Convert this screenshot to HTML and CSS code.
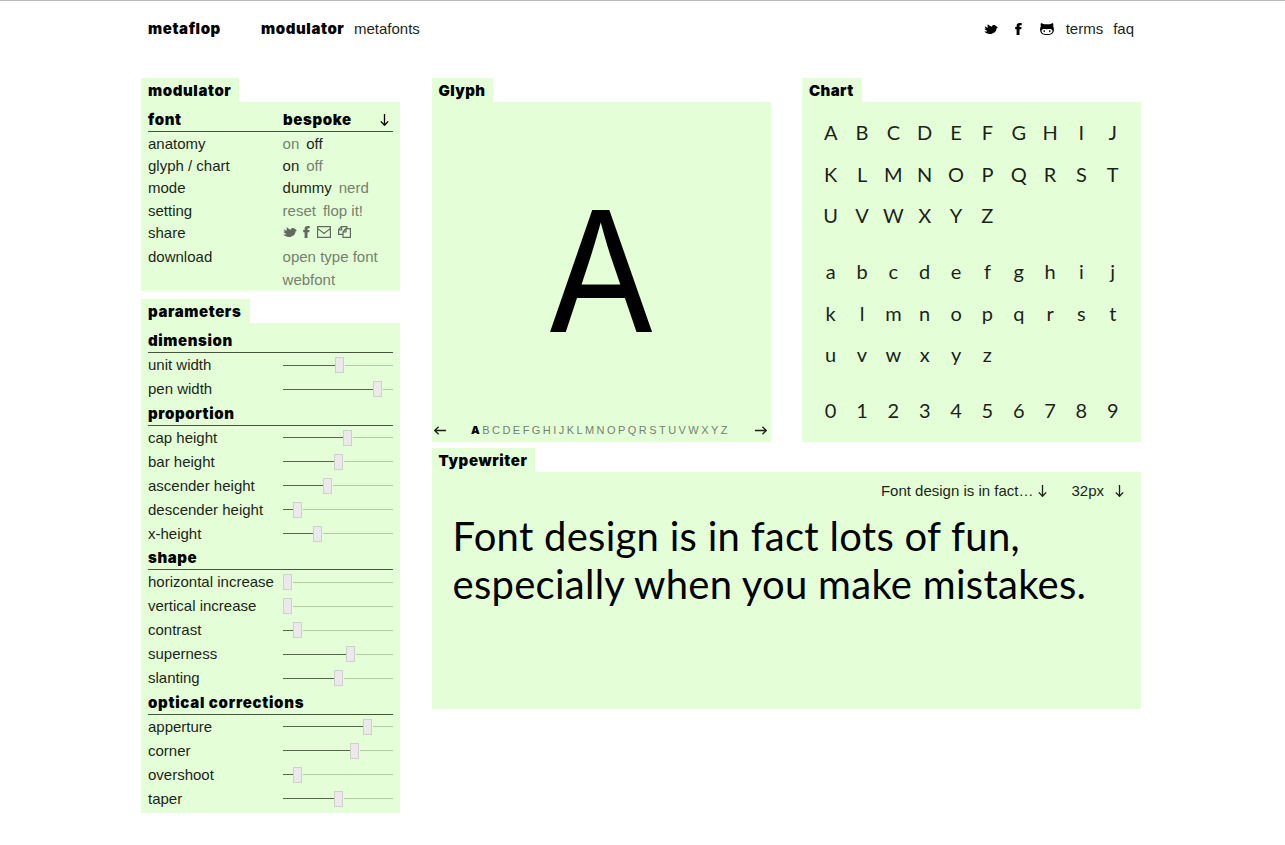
FILE: index.html
```html
<!DOCTYPE html>
<html lang="en">
<head>
<meta charset="utf-8">
<title>metaflop modulator</title>
<link rel="stylesheet" href="styles.css">
</head>
<body>
<svg class="defs" width="0" height="0">
  <symbol id="bird" viewBox="0 0 14 12"><path d="M3.800 1.200C5 2.500 6.500 3.200 7.700 3.700 8.200 1.800 10.600 1.200 12 2.900L13.900 4.600 12.500 5.400C12.300 8.600 9.500 10.900 6 10.900 3.500 10.900 1.600 10 .2 8.300 1.400 8.700 2.600 8.600 3.500 8 2 7.600 1 6.800.5 5.500L2 5.700C1.200 5 .8 4.200.8 3.300 1.900 4.200 3 4.600 4.200 4.700 3.500 3.700 3.300 2.400 3.800 1.200z"/></symbol>
  <symbol id="face" viewBox="0 0 7 12"><path d="M1.600 12V6.300H.2V3.900H1.600V3C1.600.9 2.700 0 4.700 0h2v2.300H5.600c-.8 0-1.100.3-1.100.9v.7h2L6.300 6.300H4.500V12z"/></symbol>
  <symbol id="cat" viewBox="0 0 14 12"><path fill-rule="evenodd" d="M1 .1 4.100 1.300h5.800L13 .1c.5 1.300.4 2.400.1 3.200 1.200 1.800 1.100 4.800-.2 6.600C11.800 11.400 9.700 12 7 12s-4.800-.6-5.900-2.100C-.2 8.100-.3 5.100.9 3.300.6 2.500.5 1.400 1 .1zM3.500 6C1.800 6.200 1.400 7.300 1.600 8.600 1.900 10.600 4 11.100 7 11.100s5.100-.5 5.400-2.500c.2-1.300-.2-2.400-1.900-2.600-1.200-.1-2.300.2-3.500.2S4.700 5.900 3.500 6z"/><ellipse cx="4.200" cy="8.200" rx=".7" ry="1.100"/><ellipse cx="9.800" cy="8.200" rx=".7" ry="1.100"/></symbol>
  <symbol id="mail" viewBox="0 0 14 12"><path fill="none" stroke="currentColor" stroke-width="1.200" d="M.6.6h12.800v10.800H.6zM.8 2.600 7 7.400l6.200-4.800"/></symbol>
  <symbol id="copy" viewBox="0 0 13 12"><path fill="none" stroke="currentColor" stroke-width="1.200" d="M5 8.400H.6V3.500L3.400.6h5.500v2M.6 3.800h3V.8M5 6l2.800-3.400h4.600v8.800H5zM5 6h3V2.800"/></symbol>
  <symbol id="down" viewBox="0 0 9 12"><path fill="none" stroke="currentColor" stroke-width="1.300" d="M4.500 0v11M.8 7.400l3.700 3.900 3.700-3.900"/></symbol>
  <symbol id="right" viewBox="0 0 12 9"><path fill="none" stroke="currentColor" stroke-width="1.300" d="M0 4.500h11M7.400.8l3.900 3.700-3.900 3.700"/></symbol>
</svg>

<div class="page">
  <header class="top">
    <a class="logo">metaflop</a>
    <a class="strong nav-current">modulator</a>
    <a class="nav-link">metafonts</a>
    <div class="meta">
      <svg class="i-bird"><use href="#bird"/></svg>
      <svg class="i-face"><use href="#face"/></svg>
      <svg class="i-cat"><use href="#cat"/></svg>
      <a class="terms">terms</a>
      <a>faq</a>
    </div>
  </header>

  <main class="columns">
    <aside class="side">
      <section class="block settings">
        <h2 class="tab t-modulator">modulator</h2>
        <div class="panel">
          <div class="head"><span>font</span><span class="bespoke">bespoke</span><svg class="i-down"><use href="#down"/></svg></div>
          <div class="row"><span>anatomy</span><span class="opts"><a>on</a><a class="on">off</a></span></div>
          <div class="row"><span>glyph / chart</span><span class="opts"><a class="on">on</a><a>off</a></span></div>
          <div class="row"><span>mode</span><span class="opts"><a class="on">dummy</a><a>nerd</a></span></div>
          <div class="row"><span>setting</span><span class="opts"><a>reset</a><a>flop it!</a></span></div>
          <div class="row share"><span>share</span><span class="icons"><svg class="i-bird"><use href="#bird"/></svg><svg class="i-face"><use href="#face"/></svg><svg class="i-mail"><use href="#mail"/></svg><svg class="i-copy"><use href="#copy"/></svg></span></div>
          <div class="row"><span>download</span><span class="opts"><a>open type font</a></span></div>
          <div class="row"><span></span><span class="opts"><a>webfont</a></span></div>
        </div>
      </section>

      <section class="block params">
        <h2 class="tab t-parameters">parameters</h2>
        <div class="panel">
          <h3 class="head">dimension</h3>
          <div class="param"><span>unit width</span><span class="slider"><i class="fill" style="width:52px"></i><b class="knob"></b><i class="rest"></i></span></div>
          <div class="param"><span>pen width</span><span class="slider"><i class="fill" style="width:90px"></i><b class="knob"></b><i class="rest"></i></span></div>
          <h3 class="head">proportion</h3>
          <div class="param"><span>cap height</span><span class="slider"><i class="fill" style="width:60px"></i><b class="knob"></b><i class="rest"></i></span></div>
          <div class="param"><span>bar height</span><span class="slider"><i class="fill" style="width:51px"></i><b class="knob"></b><i class="rest"></i></span></div>
          <div class="param"><span>ascender height</span><span class="slider"><i class="fill" style="width:40px"></i><b class="knob"></b><i class="rest"></i></span></div>
          <div class="param"><span>descender height</span><span class="slider"><i class="fill" style="width:10px"></i><b class="knob"></b><i class="rest"></i></span></div>
          <div class="param"><span>x-height</span><span class="slider"><i class="fill" style="width:30px"></i><b class="knob"></b><i class="rest"></i></span></div>
          <h3 class="head">shape</h3>
          <div class="param"><span>horizontal increase</span><span class="slider"><i class="fill" style="width:0px"></i><b class="knob"></b><i class="rest"></i></span></div>
          <div class="param"><span>vertical increase</span><span class="slider"><i class="fill" style="width:0px"></i><b class="knob"></b><i class="rest"></i></span></div>
          <div class="param"><span>contrast</span><span class="slider"><i class="fill" style="width:10px"></i><b class="knob"></b><i class="rest"></i></span></div>
          <div class="param"><span>superness</span><span class="slider"><i class="fill" style="width:63px"></i><b class="knob"></b><i class="rest"></i></span></div>
          <div class="param"><span>slanting</span><span class="slider"><i class="fill" style="width:51px"></i><b class="knob"></b><i class="rest"></i></span></div>
          <h3 class="head wide">optical corrections</h3>
          <div class="param"><span>apperture</span><span class="slider"><i class="fill" style="width:80px"></i><b class="knob"></b><i class="rest"></i></span></div>
          <div class="param"><span>corner</span><span class="slider"><i class="fill" style="width:67px"></i><b class="knob"></b><i class="rest"></i></span></div>
          <div class="param"><span>overshoot</span><span class="slider"><i class="fill" style="width:10px"></i><b class="knob"></b><i class="rest"></i></span></div>
          <div class="param"><span>taper</span><span class="slider"><i class="fill" style="width:51px"></i><b class="knob"></b><i class="rest"></i></span></div>
        </div>
      </section>
    </aside>

    <div class="work">
      <div class="views">
        <section class="block">
          <h2 class="tab t-glyph">Glyph</h2>
          <div class="panel glyph">
            <div class="big"><span>A</span></div>
            <div class="picker">
              <svg class="i-right flip"><use href="#right"/></svg>
              <div class="letters"><b>A</b>BCDEFGHIJKLMNOPQRSTUVWXYZ</div>
              <svg class="i-right"><use href="#right"/></svg>
            </div>
          </div>
        </section>
        <section class="block">
          <h2 class="tab t-chart">Chart</h2>
          <div class="panel chart">
            <div class="set"><span>A</span><span>B</span><span>C</span><span>D</span><span>E</span><span>F</span><span>G</span><span>H</span><span>I</span><span>J</span><span>K</span><span>L</span><span>M</span><span>N</span><span>O</span><span>P</span><span>Q</span><span>R</span><span>S</span><span>T</span><span>U</span><span>V</span><span>W</span><span>X</span><span>Y</span><span>Z</span></div>
            <div class="set"><span>a</span><span>b</span><span>c</span><span>d</span><span>e</span><span>f</span><span>g</span><span>h</span><span>i</span><span>j</span><span>k</span><span>l</span><span>m</span><span>n</span><span>o</span><span>p</span><span>q</span><span>r</span><span>s</span><span>t</span><span>u</span><span>v</span><span>w</span><span>x</span><span>y</span><span>z</span></div>
            <div class="set"><span>0</span><span>1</span><span>2</span><span>3</span><span>4</span><span>5</span><span>6</span><span>7</span><span>8</span><span>9</span></div>
          </div>
        </section>
      </div>
      <section class="block writer">
        <h2 class="tab t-typewriter">Typewriter</h2>
        <div class="panel">
          <div class="tools"><span class="sample-name">Font design is in fact…</span><svg class="i-down"><use href="#down"/></svg><span class="size">32px</span><svg class="i-down"><use href="#down"/></svg></div>
          <p class="sample">Font design is in fact lots of fun,<br>especially when you make mistakes.</p>
        </div>
      </section>
    </div>
  </main>
</div>
</body>
</html>
```
FILE: styles.css
```css
* { box-sizing: border-box; }
body {
  margin: 0;
  background: #fff;
  border-top: 1px solid #bbb;
  font: 15px/22px "Liberation Sans", Arial, sans-serif;
  color: #1c1f1a;
  overflow: hidden;
}
h2, h3, p { margin: 0; }
svg { display: block; fill: currentColor; flex: none; }
.defs { position: absolute; }
.page { width: 1000px; margin-left: 141px; }

.top { display: flex; align-items: center; height: 55px; padding: 0 7px; }
.logo, .strong, .tab, .head {
  font-family: Inter, "Liberation Sans", sans-serif;
  font-weight: 900;
  font-size: 15px;
  letter-spacing: .600px;
  color: #000;
}
.logo { width: 113px; }
.nav-current { width: 93px; }
.meta { display: flex; align-items: center; margin-left: auto; color: #1c1f1a; }
.meta svg { color: #000; }
.i-bird { width: 14px; height: 12px; }
.i-face { width: 7px; height: 12px; }
.i-cat { width: 14px; height: 12px; }
.i-mail { width: 14px; height: 12px; }
.i-copy { width: 13px; height: 12px; }
.i-down { width: 9px; height: 12px; }
.i-right { width: 12px; height: 9px; }
.flip { transform: scaleX(-1); }
.meta .i-face { margin: 0 18px 0 17px; }
.terms { margin: 0 10px 0 12px; }

.columns { display: flex; gap: 31.500px; padding-top: 22px; }
.side { width: 259px; }
.work { flex: 1; }
.views { display: grid; grid-template-columns: 339px 339px; justify-content: space-between; }
.tab { height: 24px; line-height: 25px; padding-left: 7px; background: #e4ffd7; }
.panel { background: #e4ffd7; }
.t-modulator { width: 98px; }
.t-parameters { width: 109px; }
.t-glyph { width: 61.500px; }
.t-chart { width: 60px; letter-spacing: .400px; }
.t-glyph { letter-spacing: .400px; }
.t-typewriter { width: 103.500px; }

.side .panel { padding: 5px 7px 0; }
.settings .panel { height: 189.400px; }
.head { display: flex; align-items: center; height: 24.600px; padding-top: 2px; border-bottom: 1px solid #45533f; }
.head > span:first-child { width: 135px; }
.wide { letter-spacing: .720px; }
.bespoke { width: 97px; }
.row { display: flex; height: 22.400px; line-height: 23px; }
.row > span:first-child, .param > span:first-child { width: 134.600px; flex: none; white-space: nowrap; }
.opts { display: flex; gap: 7px; color: #75806f; white-space: nowrap; }
.on { color: #1c1f1a; }
.share { height: 24px; }
.icons { display: flex; align-items: center; height: 22px; color: #62695e; }
.icons .i-face { margin: 0 7px 0 6px; }
.icons .i-copy { margin-left: 7px; }
.params { margin-top: 7.600px; }
.params .panel { height: 490px; padding-top: 5.500px; }
.param { display: flex; align-items: center; height: 24px; }
.slider { display: flex; align-items: center; width: 110px; }
.fill { height: 1px; background: #55634f; }
.knob { width: 9px; height: 16px; background: #ebe9eb; border: 1px solid #d0cfcc; }
.rest { flex: 1; height: 1px; margin-left: 1px; background: #b4c9ac; }

.glyph { display: flex; flex-direction: column; height: 340px; }
.big { flex: 1; display: flex; justify-content: center; padding-top: 67px; font: 400 168px/204px Inter, sans-serif; color: #000; }
.big span { transform: scaleX(.95); }
.picker { display: flex; align-items: center; justify-content: space-between; height: 24px; padding: 0 3px 0 2px; color: #1c1f1a; }
.letters { font-size: 11px; letter-spacing: 2.450px; color: #75806f; }
.letters b { font-family: Inter, sans-serif; font-weight: 900; color: #000; }

.chart { height: 340px; padding: 10.200px 0 0 13px; font: 20px/41.500px Lato, sans-serif; color: #1c1f1a; }
.set { display: grid; grid-template-columns: repeat(10, 31.350px); text-align: center; margin-bottom: 14.500px; }

.writer { margin-top: 6.400px; }
.writer .panel { height: 236.500px; padding: 8px 17px 0 21px; }
.tools { display: flex; align-items: center; justify-content: flex-end; height: 22px; }
.tools .i-down { margin-left: 5px; }
.size { margin-left: 24px; }
.size + .i-down { margin-left: 11px; }
.sample { padding-top: 10px; font: 40px/48px Lato, sans-serif; letter-spacing: .270px; color: #000; white-space: nowrap; }
```
